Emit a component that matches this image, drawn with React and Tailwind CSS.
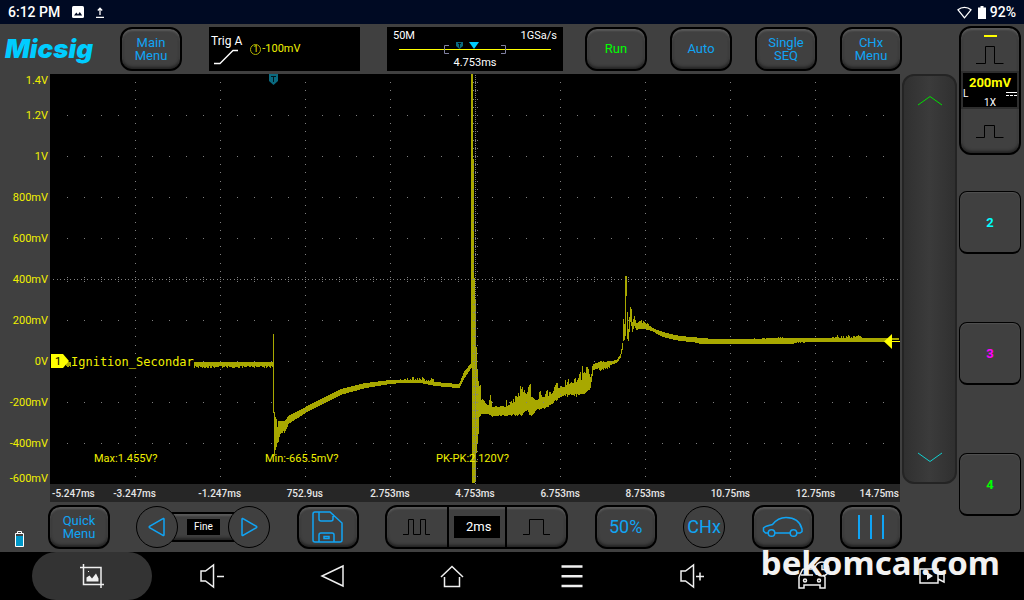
import clsx from "clsx";

const PLOT_W = 850;
const PLOT_H = 410;

const voltLabels = ["1.4V", "1.2V", "1V", "800mV", "600mV", "400mV", "200mV", "0V", "-200mV", "-400mV", "-600mV"];

const timeLabels = [
  "-5.247ms",
  "-3.247ms",
  "-1.247ms",
  "752.9us",
  "2.753ms",
  "4.753ms",
  "6.753ms",
  "8.753ms",
  "10.75ms",
  "12.75ms",
  "14.75ms",
];

const measurements = ["Max:1.455V?", "Min:-665.5mV?", "PK-PK:2.120V?"];

// [x, top, bottom, noise up, noise down] in plot units
const envelope = [
  [16, 288, 292, 0, 2],
  [222, 288, 292, 0, 1],
  [223, 260, 339, 0, 0],
  [224, 338, 382, 0, 0],
  [225, 343, 376, 0, 0],
  [226, 345, 373, 0, 0],
  [227, 353, 369, 0, 0],
  [228, 347, 368, 0, 0],
  [230, 347, 358, 0, 2],
  [234, 347, 357, 0, 2],
  [238, 342, 350, 0, 0],
  [255, 333, 339, 0, 0],
  [270, 325, 331, 0, 0],
  [290, 315, 321, 0, 0],
  [315, 309, 314, 0, 0],
  [340, 306, 310, 0, 0],
  [350, 306, 309, 3, 0],
  [370, 306, 309, 3, 0],
  [385, 308, 312, 0, 0],
  [407, 310, 314, 0, 0],
  [409, 309, 314, 0, 0],
  [414, 297, 304, 0, 0],
  [420, 290, 295, 0, 0],
  [421, 0, 294, 0, 0],
  [422, 0, 409, 0, 0],
  [423, 85, 409, 0, 0],
  [424, 204, 409, 0, 0],
  [425, 226, 408, 0, 0],
  [426, 273, 379, 0, 0],
  [427, 296, 369, 0, 0],
  [428, 307, 360, 0, 0],
  [429, 312, 343, 0, 0],
  [430, 311, 342, 0, 0],
  [431, 326, 340, 2, 0],
  [438, 332, 340, 2, 1],
  [440, 321, 341, 0, 0],
  [442, 333, 342, 1, 1],
  [455, 333, 341, 7, 2],
  [463, 329, 340, 9, 2],
  [468, 325, 340, 14, 3],
  [473, 318, 338, 6, 3],
  [477, 322, 335, 8, 2],
  [480, 310, 341, 0, 0],
  [481, 326, 342, 5, 0],
  [488, 326, 334, 10, 2],
  [498, 322, 332, 12, 2],
  [508, 316, 328, 10, 3],
  [518, 314, 326, 14, 2],
  [520, 317, 325, 4, 2],
  [526, 318, 324, 3, 1],
  [534, 312, 318, 0, 0],
  [540, 308, 314, 0, 0],
];

// burst, breakdown spike and ringing after the main event
const tail = [
  [500, 321, 330, 9, 2],
  [508, 315, 324, 3, 1],
  [514, 313, 321, 0, 0],
  [515, 311, 320, 16, 3],
  [519, 310, 320, 4, 1],
  [524, 309, 320, 16, 3],
  [532, 306, 319, 16, 2],
  [538, 297, 316, 14, 2],
  [540, 305, 314, 8, 0],
  [543, 290, 296, 0, 0],
  [549, 288, 294, 1, 4],
  [556, 288, 292, 1, 3],
  [560, 287, 291, 0, 0],
  [566, 286, 289, 0, 0],
  [570, 280, 284, 0, 0],
  [572, 269, 276, 0, 0],
  [573, 245, 267, 0, 0],
  [574, 250, 266, 0, 0],
  [575, 202, 262, 0, 0],
  [576, 202, 222, 0, 0],
  [577, 238, 265, 0, 0],
  [578, 255, 267, 0, 0],
  [579, 243, 258, 0, 0],
  [580, 233, 248, 0, 0],
  [581, 235, 252, 0, 0],
  [582, 248, 258, 0, 0],
  [584, 242, 252, 0, 0],
  [586, 249, 256, 0, 0],
  [589, 248, 255, 3, 0],
  [593, 249, 255, 4, 0],
  [602, 254, 257, 0, 0],
  [610, 257, 262, 0, 0],
  [620, 260, 265, 0, 0],
  [630, 262, 267, 0, 0],
  [642, 263, 268, 0, 0],
  [651, 264, 270, 0, 0],
  [665, 265, 270, 0, 0],
  [695, 265, 270, 1, 0],
  [743, 264, 270, 0, 0],
  [745, 264, 268, 0, 1],
  [755, 264, 268, 0, 0],
  [782, 264, 268, 3, 0],
  [812, 264, 268, 0, 0],
  [838, 264, 268, 0, 0],
  [843, 264, 266, 0, 0],
  [849, 264, 266, 0, 0],
];

const points = [...envelope.filter(([x]) => x < 500), ...tail];

const noise = (n) => {
  const v = Math.sin(n * 127.1) * 43758.5453;
  return v - Math.floor(v);
};

const buildTrace = () => {
  let d = "";
  for (let i = 0; i < points.length - 1; i++) {
    const [x0, t0, b0, u0, d0] = points[i];
    const [x1, t1, b1] = points[i + 1];
    for (let x = x0; x < x1; x++) {
      const k = (x - x0) / (x1 - x0);
      const up = u0 * Math.pow(noise(x), 2);
      const down = d0 * noise(x + 500);
      const top = Math.round(t0 + (t1 - t0) * k - up);
      const bottom = Math.round(b0 + (b1 - b0) * k + down);
      d += `M${x} ${top}h1V${bottom}h-1z`;
    }
  }
  return d;
};

const buildGrid = () => {
  let d = "";
  const dot = (x, y) => {
    d += `M${Math.round(x)} ${Math.round(y)}h1v1h-1z`;
  };
  for (let row = 1; row < 10; row++) {
    for (let i = 1; i < 50; i++) dot(i * 17, row * 41);
  }
  for (let col = 1; col < 10; col++) {
    for (let i = 1; i < 50; i++) dot(col * 85, i * 8.2);
  }
  // centre axes
  for (let i = 1; i < 250; i++) {
    dot(i * 3.4, 205);
    if (i % 5 === 0) {
      dot(i * 3.4, 203);
      dot(i * 3.4, 207);
    }
  }
  for (let y = 1; y < PLOT_H; y += 2) dot(425, y);
  for (let i = 1; i < 50; i++) {
    dot(423, i * 8.2);
    dot(427, i * 8.2);
  }
  return d;
};

const trace = buildTrace();
const grid = buildGrid();

const keyStyle =
  "border-2 border-black bg-[#404040] shadow-[inset_0_2px_2px_#5a5a5a,inset_0_-2px_3px_#222222]";

function KeyButton({ color = "text-[#10a4f4]", size = "text-[13px]", children, ...props }) {
  return (
    <button
      type="button"
      className={clsx(
        "flex h-11 w-[62px] shrink-0 flex-col items-center justify-center rounded-xl text-center",
        keyStyle,
        color,
        size
      )}
      {...props}
    >
      {children}
    </button>
  );
}

function TwoLines({ first, second }) {
  return (
    <>
      <span className="leading-[13px]">{first}</span>
      <span className="leading-[13px]">{second}</span>
    </>
  );
}

function RoundButton({ children, ...props }) {
  return (
    <button
      type="button"
      className="z-10 flex size-[42px] shrink-0 items-center justify-center rounded-full border border-black bg-[#404040] text-lg text-[#10a4f4]"
      {...props}
    >
      {children}
    </button>
  );
}

function Stroke({ w, h, d, className = "stroke-black", width = 1, children }) {
  return (
    <svg width={w} height={h} viewBox={`0 0 ${w} ${h}`} fill="none" strokeWidth={width} className={className}>
      <path d={d} />
      {children}
    </svg>
  );
}

function StatusBar() {
  return (
    <header className="flex h-6 items-center bg-[#000a23] pr-2 pl-2 text-sm font-medium text-white">
      <span>6:12 PM</span>
      <svg width="12" height="12" viewBox="0 0 12 12" className="ml-3">
        <rect width="12" height="12" rx="1.5" fill="#fff" />
        <path d="M2 9.5 4.3 6.5 6 8.4 7.8 6 10.2 9.5z" fill="#000a23" />
      </svg>
      <svg width="8" height="11" viewBox="0 0 8 11" className="ml-3" fill="none" stroke="#fff">
        <path d="M0 10.5h8M4 8V1.5M1.8 3.5 4 1.2l2.2 2.3" strokeWidth="1.3" />
      </svg>
      <span className="flex-1" />
      <svg width="15" height="13" viewBox="0 0 15 13" fill="none" stroke="#fff" strokeWidth="1.3">
        <path d="M7.5 11.8 1 3.8c3.6-3.3 9.4-3.3 13 0z" />
      </svg>
      <svg width="8" height="13" viewBox="0 0 8 13" className="ml-1.5 mr-1" fill="#fff">
        <path d="M2.5 0h3v1.5H8V13H0V1.5h2.5z" />
      </svg>
      <span>92%</span>
    </header>
  );
}

function TopBar() {
  return (
    <div className="flex h-[50px] items-center justify-between pr-[55px] pl-[5px]">
      <div className="flex items-center gap-[27px]">
        <div className="w-[88px] font-[Inter,sans-serif] text-[26px] leading-8 font-black text-[#00ccff] italic">Micsig</div>
        <KeyButton>
          <TwoLines first="Main" second="Menu" />
        </KeyButton>
        <div className="flex h-11 w-[151px] bg-black pl-0.5 text-xs text-white">
          <div className="pt-1.5">
            <div className="leading-4">Trig A</div>
            <Stroke w={26} h={16} d="M1 14.500h6L20 1.500h5" width={1.300} className="ml-0.5 stroke-white" />
          </div>
          <div className="ml-2 flex items-center gap-px text-[11px] text-[#f0f000]">
            <span className="flex size-[11px] items-center justify-center rounded-full border border-[#b0b000] text-[9px] leading-none">
              1
            </span>
            -100mV
          </div>
        </div>
        <div className="h-11 w-[176px] bg-black px-1.5 pt-0.5 text-[11px] leading-[13px] text-white">
          <div className="flex justify-between">
            <span>50M</span>
            <span>1GSa/s</span>
          </div>
          <svg viewBox="0 0 164 14" className="h-[14px] w-full" fill="none">
            <path d="M6 7.500h152" stroke="#ffff00" />
            <path d="M56 3.500h-4.500v8H56M108 3.500h4.500v8H108" stroke="#8080a0" />
            <path d="M63 0h7v4l-3.500 3L63 4z" fill="#0a6a80" />
            <path d="M65 1.500h3M66.500 1.500v4" stroke="#000" strokeWidth="0.800" />
            <path d="M76 0h10l-5 7z" fill="#00ccff" />
          </svg>
          <div className="text-center">4.753ms</div>
        </div>
      </div>
      <div className="flex gap-[23px]">
        <KeyButton color="text-[#00ff00]">Run</KeyButton>
        <KeyButton>Auto</KeyButton>
        <KeyButton>
          <TwoLines first="Single" second="SEQ" />
        </KeyButton>
        <KeyButton>
          <TwoLines first="CHx" second="Menu" />
        </KeyButton>
      </div>
    </div>
  );
}

function Plot() {
  return (
    <div className="relative min-h-[410px] flex-1 overflow-hidden bg-black text-[11px] text-[#f0f000]">
      <svg
        viewBox={`0 0 ${PLOT_W} ${PLOT_H}`}
        preserveAspectRatio="none"
        className="absolute inset-0 size-full"
        shapeRendering="crispEdges"
      >
        <path d={trace} fill="#a8a800" />
        <path d={grid} fill="#808080" />
        <path d="M219 0h9v7l-4.500 4L219 7z" fill="#0a6a80" shapeRendering="auto" />
        <path d="M221 2.500h5M223.500 2v6" stroke="#001820" />
        <path d="M841 266h9v3h-9z" fill="#000" />
        <path d="M834 267.500l8-7.500v15z" fill="#ffff00" shapeRendering="auto" />
        <path d="M841 267h9v1h-9z" fill="#ffff00" />
      </svg>
      <div className="absolute top-[280px] left-px flex h-[14px] items-center">
        <svg width="19" height="14" viewBox="0 0 19 14">
          <path d="M0 0h12l6 7-6 7H0z" fill="#ffff00" />
          <text x="4" y="11" fontSize="11" fill="#000">
            1
          </text>
        </svg>
        <span className="mt-0.5 ml-px bg-black font-['DejaVu_Sans_Mono',monospace] text-xs leading-4">
          Ignition_Secondar
        </span>
      </div>
      <ul className="absolute bottom-[19px] left-11 flex leading-3">
        {measurements.map((m) => (
          <li key={m} className="w-[171px]">
            {m}
          </li>
        ))}
      </ul>
    </div>
  );
}

function VoltAxis() {
  return (
    <ul className="-mb-px flex w-[50px] flex-col pt-px pr-0.5 text-[11px] leading-3 text-[#f0f000]">
      {voltLabels.map((v, i) => (
        <li
          key={v}
          className={clsx(
            "flex justify-end",
            i === 0 && "h-5 items-start",
            i === voltLabels.length - 1 && "h-5 items-end",
            i > 0 && i < voltLabels.length - 1 && "flex-1 items-center"
          )}
        >
          {v}
        </li>
      ))}
    </ul>
  );
}

function TimeAxis() {
  return (
    <ul className="mr-[57px] ml-[50px] flex h-[18px] items-center bg-[#262626] text-[10px] font-medium text-[#e6e6e6]">
      {timeLabels.map((t, i) => (
        <li
          key={t}
          className={clsx(
            "flex whitespace-nowrap",
            i === 0 && "w-[42px] justify-start pl-0.5",
            i === timeLabels.length - 1 && "w-[42px] justify-end pr-px",
            i > 0 && i < timeLabels.length - 1 && "flex-1 justify-center"
          )}
        >
          {t}
        </li>
      ))}
    </ul>
  );
}

function ScrollPad() {
  return (
    <div className="ml-0.5 flex w-[55px] flex-col justify-between rounded-xl border-2 border-[#242424] bg-linear-to-r from-[#303030] via-[#3b3b3b] to-[#303030] py-[18px]">
      <button type="button" aria-label="Up" className="flex justify-center">
        <Stroke w={26} h={12} d="M1 11 13 2.500 25 11" className="stroke-[#00e000]" />
      </button>
      <button type="button" aria-label="Down" className="flex justify-center">
        <Stroke w={26} h={12} d="M1 1 13 9.500 25 1" className="stroke-[#10d0d0]" />
      </button>
    </div>
  );
}

function BottomBar() {
  return (
    <div className="flex h-[50px] items-center pr-[55px] pl-[15px]">
      <svg width="9" height="16" viewBox="0 0 9 16" className="mt-6 mr-6 shrink-0">
        <path d="M2.500 2V.5h4V2M.5 2.500h8v13h-8z" fill="none" stroke="#fff" />
        <path d="M1 5h7v10H1z" fill="#0098c8" />
      </svg>
      <div className="flex flex-1 items-center justify-between">
        <KeyButton>
          <TwoLines first="Quick" second="Menu" />
        </KeyButton>
        <div className="flex items-center">
          <RoundButton aria-label="Previous">
            <Stroke w={18} h={20} d="M16 2v16a.6.6 0 0 1-1 .4L1.500 10.600a.8.8 0 0 1 0-1.200L15 1.600a.6.6 0 0 1 1 .4z" width={1.500} className="stroke-[#10a4f4]" />
          </RoundButton>
          <div className={clsx("-mx-2 flex h-[30px] w-[66px] items-center justify-center", keyStyle)}>
            <span className="bg-black px-[7px] text-[10px] leading-4 text-white">Fine</span>
          </div>
          <RoundButton aria-label="Next">
            <Stroke w={18} h={20} d="M2 2v16a.6.6 0 0 0 1 .4L16.500 10.600a.8.8 0 0 0 0-1.200L3 1.600a.6.6 0 0 0-1 .4z" width={1.500} className="stroke-[#10a4f4]" />
          </RoundButton>
        </div>
        <KeyButton aria-label="Save">
          <Stroke
            w={32}
            h={32}
            width={1.500}
            className="stroke-[#10a4f4]"
            d="M3 1h15l12 11v17a2 2 0 0 1-2 2H3a2 2 0 0 1-2-2V3a2 2 0 0 1 2-2zM7 1v7a2 2 0 0 0 2 2h10a2 2 0 0 0 2-2V3M7 31v-7a2 2 0 0 1 2-2h11a2 2 0 0 1 2 2v7M12 25.500h5v2h-5z"
          />
        </KeyButton>
        <div className={clsx("flex h-11 w-[183px] overflow-hidden rounded-xl", keyStyle)}>
          <button type="button" aria-label="Zoom out time base" className="flex flex-1 items-center justify-center">
            <Stroke w={28} h={18} d="M0 16.500h5.500v-15h5v15h7v-15h5v15h4.500" />
          </button>
          <div className="flex w-[60px] items-center justify-center border-x-2 border-black">
            <span className="w-[46px] bg-black pl-1 text-center text-[13px] leading-[22px] text-white">2ms</span>
          </div>
          <button type="button" aria-label="Zoom in time base" className="flex flex-1 items-center justify-center">
            <Stroke w={28} h={18} d="M0 16.500h6.500v-15h14v15h6.500" />
          </button>
        </div>
        <KeyButton size="text-lg">50%</KeyButton>
        <RoundButton>CHx</RoundButton>
        <KeyButton aria-label="Automotive">
          <Stroke
            w={42}
            h={22}
            width={1.500}
            className="stroke-[#10a4f4]"
            d="M6 17H3.500L1.500 15v-3c1.500-2 5-2.500 9-3.500C14 4 19 1.500 24 1.500c8 0 14 4 16 11.500v2.500L38 17h-3M13 17h15"
          >
            <circle cx="9.500" cy="17" r="3.300" />
            <circle cx="31.500" cy="17" r="3.300" />
          </Stroke>
        </KeyButton>
        <KeyButton aria-label="Cursors">
          <Stroke w={28} h={26} d="M2 1v24M14 1v24M26 1v24" width={2} className="stroke-[#10a4f4]" />
        </KeyButton>
      </div>
    </div>
  );
}

const channelStyle =
  "h-[63px] rounded-lg border border-b-2 border-black bg-[#404040] pt-0.5 shadow-[inset_0_1px_1px_#505050]";

function Channels() {
  return (
    <aside className="flex w-[67px] shrink-0 flex-col pt-0.5 pr-[3px] pl-0.5">
      <div className={clsx("flex h-[129px] flex-col rounded-xl", keyStyle)}>
        <button type="button" aria-label="Increase channel 1 scale" className="flex h-[43px] flex-col items-center pt-[7px]">
          <span className="h-0.5 w-[13px] bg-[#ffff00]" />
          <Stroke w={28} h={20} d="M0 18.500h9.500v-17h9v17h9" className="mt-2 stroke-black" />
        </button>
        <div className="flex h-[38px] flex-col items-center border-2 border-[#2e2e2e] bg-black pt-0.5">
          <span className="text-[13px] leading-4 font-bold text-[#ffff00]">200mV</span>
          <div className="flex w-full items-center justify-between text-[10px] leading-[6px] text-white">
            <span>L</span>
            <svg width="11" height="5" viewBox="0 0 11 5" stroke="#fff" fill="none">
              <path d="M0 .5h11" />
              <path d="M0 3.500h11" strokeDasharray="3 1" />
            </svg>
          </div>
          <span className="text-[10px] leading-3 text-white">1X</span>
        </div>
        <button type="button" aria-label="Decrease channel 1 scale" className="flex flex-1 items-center justify-center">
          <Stroke w={28} h={16} d="M0 14.500h8.500v-12h10v12h9" />
        </button>
      </div>
      <div className="mt-9 flex flex-col gap-[68px] text-[13px] font-bold">
        <button type="button" className={clsx(channelStyle, "text-[#00ffff]")}>
          2
        </button>
        <button type="button" className={clsx(channelStyle, "text-[#ff00ff]")}>
          3
        </button>
        <button type="button" className={clsx(channelStyle, "text-[#00ff00]")}>
          4
        </button>
      </div>
    </aside>
  );
}

const navIcons = [
  {
    label: "Screenshot",
    d: "M0 3.500h21V24M3.500 0v20.500H24",
    extra: <path d="M6.500 17.500v-4l3-2 2.500 3 4-5 2.500 5v3zM8 7h1v1H8z" fill="#f0f0f0" stroke="none" />,
  },
  { label: "Volume down", d: "M1 7h4.500l8-6v22l-8-6H1zM17 12.500h7" },
  { label: "Back", d: "M23 2v20L2 12z" },
  { label: "Home", d: "M1 13 12 2.500 23 13M4.500 13v9.500h15V13" },
  { label: "Menu", d: "M1.500 2.500h21M1.500 12.200h21M1.500 22h21", width: 2.500 },
  { label: "Volume up", d: "M1 7h4.500l8-6v22l-8-6H1zM16 12.500h8M20 8.500v8" },
  {
    label: "Car history",
    d: "M-1 13 2 6.500a2 2 0 0 1 2-1.500h8M-1 13v11h5v-3h16v3h5V13l-2-2M1 11h12",
    extra: (
      <>
        <circle cx="5" cy="16.500" r="1.500" />
        <circle cx="19" cy="16.500" r="1.500" />
        <circle cx="22" cy="5" r="7" />
        <path d="M22 1v4.500h3.500" />
      </>
    ),
  },
  {
    label: "Video",
    d: "M0 5h18v14H0zM18 10l6-3v11l-6-3",
    extra: <path d="M7 8v8l6-4z" fill="#f0f0f0" stroke="none" />,
  },
];

function NavBar() {
  return (
    <nav className="relative flex h-12 bg-black px-8">
      <span className="pointer-events-none absolute right-6 bottom-[17px] font-['Noto_Sans',sans-serif] text-[33px] leading-10 font-bold text-[#f2f2f2]">
        bekomcar.com
      </span>
      {navIcons.map((icon, i) => (
        <button
          type="button"
          key={icon.label}
          aria-label={icon.label}
          className={clsx("flex flex-1 items-center justify-center rounded-full", i === 0 && "bg-[#333333]")}
        >
          <svg
            width="24"
            height="24"
            viewBox="0 0 24 24"
            fill="none"
            stroke="#f0f0f0"
            strokeWidth={icon.width || 1.500}
            className="overflow-visible"
          >
            <path d={icon.d} />
            {icon.extra}
          </svg>
        </button>
      ))}
    </nav>
  );
}

export default function App() {
  return (
    <div className="flex min-h-screen flex-col bg-[#404040] font-[Roboto,sans-serif]">
      <StatusBar />
      <main className="flex flex-1">
        <div className="flex flex-1 flex-col">
          <TopBar />
          <div className="flex flex-1">
            <VoltAxis />
            <Plot />
            <ScrollPad />
          </div>
          <TimeAxis />
          <BottomBar />
        </div>
        <Channels />
      </main>
      <NavBar />
    </div>
  );
}
